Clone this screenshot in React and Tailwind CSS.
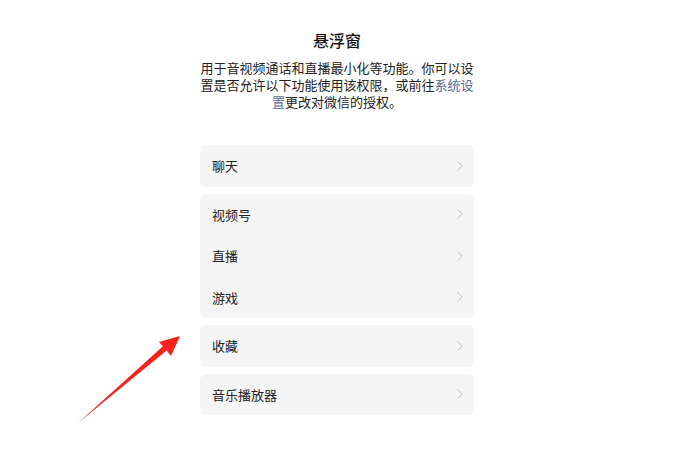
import { ChevronRight } from "lucide-react";

const groups = [["聊天"], ["视频号", "直播", "游戏"], ["收藏"], ["音乐播放器"]];

function Row({ label }) {
  return (
    <div className="flex h-[41.5px] items-center justify-between pl-3 pr-[5px]">
      <span className="text-[13px] text-[#222]">{label}</span>
      <ChevronRight className="h-[18px] w-[18px] text-[#b8b8b8]" strokeWidth={1.1} />
    </div>
  );
}

export default function App() {
  return (
    <div
      className="relative h-[464px] w-[696px] overflow-hidden bg-white"
      style={{ fontFamily: '"Noto Sans CJK SC", "Noto Sans", sans-serif' }}
    >
      <div className="ml-[200px] w-[274px] pt-[30px]">
        <h1 className="text-center text-[16px] font-medium leading-[20px] text-[#111]">悬浮窗</h1>
        <p className="mt-[9px] text-center text-[13px] leading-[17px] text-[#222]">
          用于音视频通话和直播最小化等功能。你可以设置是否允许以下功能使用该权限，或前往
          <span className="text-[#576b95]">系统设置</span>
          更改对微信的授权。
        </p>
        <div className="mt-[35px] flex flex-col gap-[7px]">
          {groups.map((g, i) => (
            <div key={i} className="rounded-[6px] bg-[#f5f5f5]">
              {g.map((label) => (
                <Row key={label} label={label} />
              ))}
            </div>
          ))}
        </div>
      </div>

      <svg className="absolute left-0 top-0" width="696" height="464" viewBox="0 0 696 464">
        <polygon
          points="78,423 166.7,350.5 171,356 180,336 159,342 162.9,346.2"
          fill="#f5231b"
        />
      </svg>
    </div>
  );
}
